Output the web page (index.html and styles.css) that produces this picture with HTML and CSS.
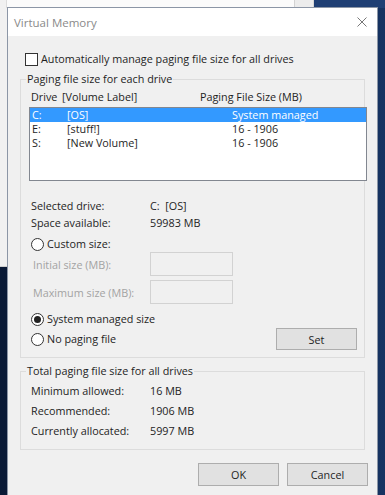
FILE: index.html
```html
<!DOCTYPE html>
<html lang="en">
<head>
<meta charset="utf-8">
<title>Virtual Memory</title>
<link rel="stylesheet" href="styles.css">
</head>
<body>
<div class="desktop">
  <div class="bg-window">
    <div class="bg-strip">
      <span class="bg-cell"></span>
    </div>
  </div>

  <div class="dialog">
    <div class="titlebar">
      <span class="title">Virtual Memory</span>
      <svg class="close" width="10" height="10" viewBox="0 0 10 10"><path d="M0.5 0.5 L9.5 9.5 M9.5 0.5 L0.5 9.5" stroke="#777" stroke-width="1" fill="none"/></svg>
    </div>
    <div class="body">
      <label class="check-row">
        <span class="checkbox"></span>
        <span>Automatically manage paging file size for all drives</span>
      </label>

      <fieldset class="group group-drives">
        <legend>Paging file size for each drive</legend>
        <div class="list-head">
          <span class="lh-drive">Drive</span><span class="lh-label">[Volume Label]</span><span class="lh-size">Paging File Size (MB)</span>
        </div>
        <div class="listbox">
          <div class="lrow selected"><span class="c1">C:</span><span class="c2">[OS]</span><span class="c3">System managed</span></div>
          <div class="lrow"><span class="c1">E:</span><span class="c2">[stuff!]</span><span class="c3">16 - 1906</span></div>
          <div class="lrow"><span class="c1">S:</span><span class="c2">[New Volume]</span><span class="c3">16 - 1906</span></div>
        </div>

        <div class="info">
          <span>Selected drive:</span><span>C:&nbsp; [OS]</span>
          <span>Space available:</span><span>59983 MB</span>
        </div>

        <div class="radio-row custom">
          <span class="radio"></span><span>Custom size:</span>
        </div>
        <div class="field-row first">
          <span class="disabled">Initial size (MB):</span><span class="input"></span>
        </div>
        <div class="field-row">
          <span class="disabled">Maximum size (MB):</span><span class="input"></span>
        </div>

        <div class="radio-row system">
          <span class="radio checked"></span><span>System managed size</span>
        </div>
        <div class="set-row">
          <div class="radio-row"><span class="radio"></span><span>No paging file</span></div>
          <button class="btn set">Set</button>
        </div>
      </fieldset>

      <fieldset class="group group-total">
        <legend>Total paging file size for all drives</legend>
        <div class="totals">
          <span>Minimum allowed:</span><span>16 MB</span>
          <span>Recommended:</span><span>1906 MB</span>
          <span>Currently allocated:</span><span>5997 MB</span>
        </div>
      </fieldset>

      <div class="buttons">
        <button class="btn">OK</button>
        <button class="btn">Cancel</button>
      </div>
    </div>
  </div>
</div>
</body>
</html>
```
FILE: styles.css
```css
* { box-sizing: border-box; }
html, body {
  margin: 0;
  padding: 0;
  width: 385px;
  height: 495px;
  overflow: hidden;
}
body {
  background: linear-gradient(90deg, #0a1a36 0%, #0d2244 60%, #163362 100%);
  font-family: "Open Sans", "Noto Sans", sans-serif;
  font-size: 10.8px;
  color: #1e1e1e;
  white-space: nowrap;
}
.desktop {
  position: relative;
  width: 385px;
  height: 495px;
}
.desktop::before {
  content: "";
  position: absolute;
  left: 314px;
  top: 0;
  width: 71px;
  height: 8px;
  background: #1f3f74;
}
.bg-window {
  position: absolute;
  left: 0;
  top: 0;
  width: 314px;
  height: 267px;
  background: #f1f1f1;
  border-right: 1px solid #d6d6d6;
  border-bottom: 1px solid #cfcfcf;
}
.bg-strip {
  height: 8px;
  margin-left: 6px;
  border-left: 1px solid #dcdcdc;
  background: #fbfbfb;
  display: flex;
  justify-content: flex-end;
}
.bg-cell {
  width: 19px;
  height: 8px;
  background: #ececec;
  border-left: 1px solid #d3d3d3;
}

.dialog {
  position: absolute;
  left: 7px;
  top: 7px;
  width: 371px;
  height: 500px;
  background: #f0f0f0;
  border: 1px solid #8c96a6;
  display: flex;
  flex-direction: column;
}
.titlebar {
  height: 28px;
  background: #ffffff;
  display: flex;
  align-items: center;
  justify-content: space-between;
  padding: 0 10px 0 6px;
  flex: none;
}
.title {
  color: #8a8a8a;
  font-size: 11.5px;
}
.close { display: block; }

.body {
  display: flex;
  flex-direction: column;
  padding: 0 12px;
}
.check-row {
  display: flex;
  align-items: center;
  height: 14px;
  margin-top: 16px;
  padding-left: 5px;
  gap: 3px;
  line-height: 14px;
}
.checkbox {
  width: 13px;
  height: 13px;
  border: 1px solid #333;
  background: #fff;
}

.group {
  margin: 0;
  padding: 0;
  border: 1px solid #dcdcdc;
  min-width: 0;
}
.group legend {
  margin-left: 5px;
  padding: 0 1px;
  line-height: 14px;
  height: 14px;
}
.group-drives {
  margin-top: 6px;
  padding-bottom: 7px;
}
.list-head {
  display: flex;
  margin-top: 4px;
  padding-left: 10px;
  line-height: 14px;
  height: 14px;
}
.lh-drive { width: 31px; flex: none; }
.lh-label { width: 138px; flex: none; }
.lh-size { flex: none; }

.listbox {
  width: 338px;
  height: 74px;
  margin: 3px 0 0 8px;
  background: #fff;
  border: 1px solid #828790;
}
.lrow {
  display: flex;
  height: 14px;
  line-height: 14px;
  padding-left: 2px;
}
.lrow.selected {
  background: #3399ff;
  color: #fff;
}
.c1 { width: 35px; flex: none; }
.c2 { width: 165px; flex: none; }

.info, .totals {
  display: grid;
  grid-template-columns: 119px auto;
  padding-left: 10px;
}
.info {
  margin-top: 16px;
  line-height: 17px;
}
.radio-row {
  display: flex;
  align-items: center;
  gap: 3px;
  line-height: 14px;
  height: 14px;
}
.custom {
  margin-top: 6px;
  padding-left: 10px;
}
.radio {
  width: 13px;
  height: 13px;
  border: 1px solid #333;
  border-radius: 50%;
  background: #fff;
  display: flex;
  align-items: center;
  justify-content: center;
}
.radio.checked::after {
  content: "";
  width: 7px;
  height: 7px;
  border-radius: 50%;
  background: #222;
}
.field-row {
  display: grid;
  grid-template-columns: 117px 83px;
  align-items: center;
  height: 24px;
  padding-left: 12px;
  margin-top: 4px;
}
.field-row.first { margin-top: 1px; }
.disabled { color: #a3a3a3; }
.input {
  height: 24px;
  border: 1px solid #d2d2d2;
  background: #f0f0f0;
}
.system {
  margin-top: 8px;
  padding-left: 10px;
}
.set-row {
  display: flex;
  align-items: center;
  justify-content: space-between;
  margin-top: 2px;
  padding-left: 10px;
  padding-right: 7px;
  height: 22px;
}
.btn {
  font-family: inherit;
  font-size: 10.8px;
  color: #1e1e1e;
  background: #e1e1e1;
  border: 1px solid #adadad;
  padding: 0;
  width: 81px;
  height: 23px;
}
.set-row .btn { height: 22px; }

.group-total {
  margin-top: 6px;
  padding-bottom: 8px;
}
.totals {
  margin-top: 3px;
  line-height: 20px;
}
.buttons {
  display: flex;
  justify-content: flex-end;
  gap: 8px;
  margin-top: 13px;
  margin-right: -3px;
}
```
